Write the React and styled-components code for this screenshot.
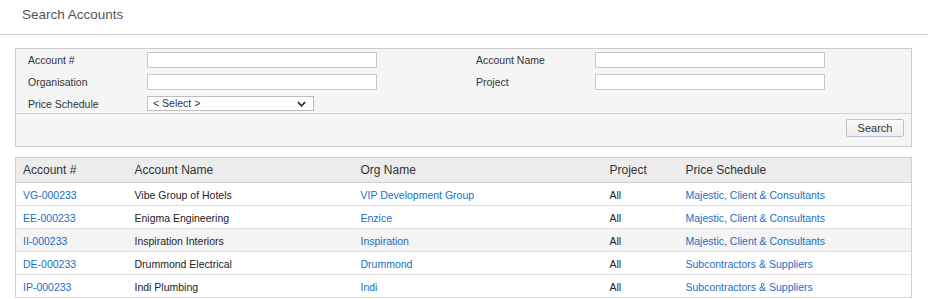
import React from "react";
import styled, { createGlobalStyle } from "styled-components";

const GlobalStyle = createGlobalStyle`
  body {
    margin: 0;
    background: #fff;
    font-family: "Liberation Sans", Arial, sans-serif;
    color: #333;
  }
`;

const accounts = [
  { id: "VG-000233", name: "Vibe Group of Hotels", org: "VIP Development Group", project: "All", schedule: "Majestic, Client & Consultants" },
  { id: "EE-000233", name: "Enigma Engineering", org: "Enzice", project: "All", schedule: "Majestic, Client & Consultants" },
  { id: "II-000233", name: "Inspiration Interiors", org: "Inspiration", project: "All", schedule: "Majestic, Client & Consultants", shaded: true },
  { id: "DE-000233", name: "Drummond Electrical", org: "Drummond", project: "All", schedule: "Subcontractors & Suppliers" },
  { id: "IP-000233", name: "Indi Plumbing", org: "Indi", project: "All", schedule: "Subcontractors & Suppliers" },
];

const App = () => {
  return (
    <>
      <GlobalStyle />
      <PageHeader>
        <h1 className="title">Search Accounts</h1>
      </PageHeader>
      <Content>
        <SearchPanel>
          <FormGrid>
            <Label>Account #</Label>
            <TextInput />
            <span />
            <Label>Account Name</Label>
            <TextInput />

            <Label>Organisation</Label>
            <TextInput />
            <span />
            <Label>Project</Label>
            <TextInput />

            <Label>Price Schedule</Label>
            <SelectWrap>
              <select defaultValue="">
                <option value="">&lt; Select &gt;</option>
              </select>
              <svg viewBox="0 0 10 6" width="9" height="6">
                <path d="M1 1 L5 5 L9 1" fill="none" stroke="#333" strokeWidth="2" />
              </svg>
            </SelectWrap>
          </FormGrid>
          <ActionBar>
            <Button>Search</Button>
          </ActionBar>
        </SearchPanel>

        <ResultsTable>
          <colgroup>
            <col style={{ width: 112 }} />
            <col style={{ width: 226 }} />
            <col style={{ width: 249 }} />
            <col style={{ width: 76 }} />
            <col />
          </colgroup>
          <thead>
            <tr>
              <HeadCell>Account #</HeadCell>
              <HeadCell>Account Name</HeadCell>
              <HeadCell>Org Name</HeadCell>
              <HeadCell>Project</HeadCell>
              <HeadCell>Price Schedule</HeadCell>
            </tr>
          </thead>
          <tbody>
            {accounts.map((a) => (
              <Row key={a.id} shaded={a.shaded ? 1 : 0}>
                <Cell><Link href="#">{a.id}</Link></Cell>
                <Cell>{a.name}</Cell>
                <Cell><Link href="#">{a.org}</Link></Cell>
                <Cell>{a.project}</Cell>
                <Cell><Link href="#">{a.schedule}</Link></Cell>
              </Row>
            ))}
          </tbody>
        </ResultsTable>
      </Content>
    </>
  );
};

const PageHeader = styled.header`
  height: 35px;
  box-sizing: border-box;
  border-bottom: 1px solid #cfcfcf;
  display: flex;
  align-items: center;
  padding: 0 0 6px 22px;

  .title {
    margin: 0;
    font-size: 13.5px;
    font-weight: normal;
    color: #555;
  }
`;

const Content = styled.main`
  padding: 13px 16px 0 15px;
`;

const SearchPanel = styled.section`
  border: 1px solid #cccccc;
  background: #f5f5f5;
`;

const FormGrid = styled.div`
  display: grid;
  grid-template-columns: 119px 230px 99px 119px 230px;
  grid-auto-rows: 16px;
  row-gap: 6px;
  align-items: center;
  padding: 3px 12px 1px;
`;

const Label = styled.label`
  font-size: 10.5px;
  line-height: 16px;
  color: #333;
`;

const TextInput = styled.input.attrs({ type: "text" })`
  box-sizing: border-box;
  height: 16px;
  width: 230px;
  margin: 0;
  border: 1px solid #c8c8c8;
  background: #fff;
  padding: 0 3px;
  font: inherit;
  font-size: 11px;
  outline: none;
`;

const SelectWrap = styled.div`
  position: relative;
  width: 167px;
  height: 15px;
  align-self: start;

  select {
    appearance: none;
    display: block;
    box-sizing: border-box;
    width: 100%;
    height: 15px;
    margin: 0;
    border: 1px solid #bdbdbd;
    background: #fff;
    padding: 0 0 1px 5px;
    font-family: "Liberation Sans", Arial, sans-serif;
    font-size: 10.5px;
    line-height: 13px;
    color: #333;
    border-radius: 0;
    outline: none;
  }

  svg {
    position: absolute;
    right: 8px;
    top: 5px;
    pointer-events: none;
  }
`;

const ActionBar = styled.div`
  border-top: 1px solid #d2d2d2;
  height: 32px;
  box-sizing: content-box;
  display: flex;
  align-items: flex-start;
  justify-content: flex-end;
  padding: 5px 7px 0 0;
  height: 27px;
`;

const Button = styled.button`
  box-sizing: border-box;
  width: 58px;
  height: 18px;
  border: 1px solid #b9c3cf;
  border-radius: 2px;
  background: linear-gradient(#fbfbfb, #ededed);
  font-family: "Liberation Sans", Arial, sans-serif;
  font-size: 11px;
  line-height: 16px;
  color: #333;
  padding: 0;
  cursor: pointer;
`;

const ResultsTable = styled.table`
  margin-top: 10px;
  width: 100%;
  table-layout: fixed;
  border-collapse: collapse;
  border: 1px solid #cfcfcf;
`;

const HeadCell = styled.th`
  background: #ececec;
  height: 24px;
  padding: 0 7px;
  text-align: left;
  font-weight: normal;
  font-size: 12px;
  color: #333;
  border-bottom: 1px solid #cfcfcf;
`;

const Row = styled.tr`
  background: ${(p) => (p.shaded ? "#f4f4f4" : "#fff")};
`;

const Cell = styled.td`
  height: 21px;
  padding: 1px 7px 0;
  font-size: 10.5px;
  color: #222;
  border-bottom: 1px solid #dcdcdc;
  white-space: nowrap;
`;

const Link = styled.a`
  color: #1b6ec2;
  text-decoration: none;
`;

export default App;
